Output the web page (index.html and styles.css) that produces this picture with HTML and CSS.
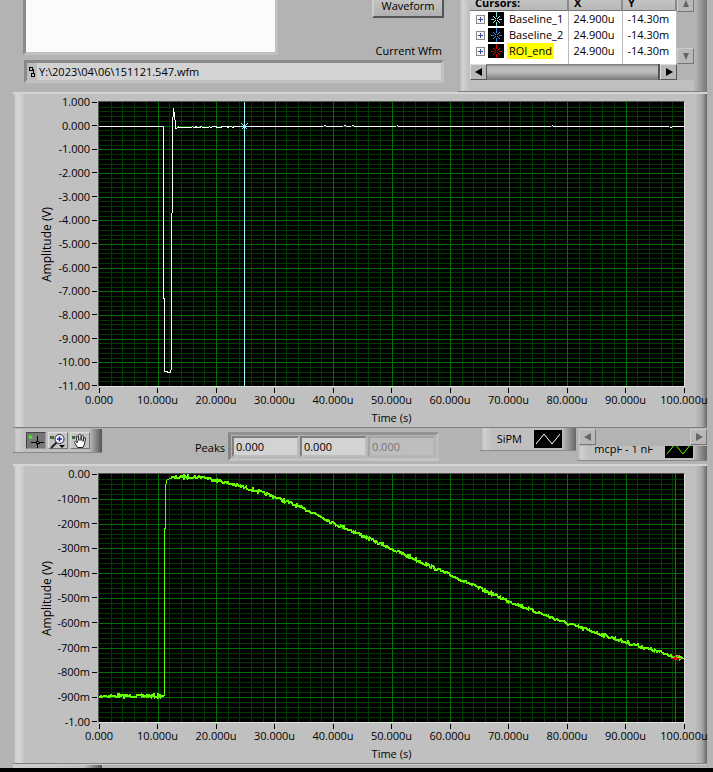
FILE: index.html
```html
<!DOCTYPE html>
<html lang="en">

<head>
    <meta charset="UTF-8">
    <meta name="viewport" content="width=device-width, initial-scale=1.0">
    <title>Waveform Viewer</title>
    <link rel="stylesheet" href="styles.css">
</head>

<body>
    <!--shared icons-->
    <svg class="defs" aria-hidden="true">
        <symbol id="cross" viewBox="0 0 16 16">
            <path d="M2 8.5h4M11 8.5h4M8.5 0v6M8.5 11v5" fill="none" stroke="currentColor" shape-rendering="crispEdges" />
            <path d="M5 5h1v1h-1zM6 6h1v1h-1zM11 5h1v1h-1zM10 6h1v1h-1zM7 7h1v1h-1zM9 7h1v1h-1zM7 9h1v1h-1zM9 9h1v1h-1zM6 10h1v1h-1zM10 10h1v1h-1zM5 11h1v1h-1zM11 11h1v1h-1z" fill="currentColor" shape-rendering="crispEdges" />
        </symbol>
        <symbol id="wave" viewBox="0 0 28 18">
            <path d="M2 14l8-10 8 10 8-10" fill="none" stroke="currentColor" />
        </symbol>
    </svg>

    <div class="top">
        <div class="file">
            <div class="file-row">
                <textarea class="notes" aria-label="Notes"></textarea>
                <div class="actions">
                    <button class="waveform">Waveform</button>
                    <label for="path">Current Wfm</label>
                </div>
            </div>
            <div class="path">
                <svg width="8" height="12" viewBox="0 0 8 12" aria-hidden="true">
                    <path d="M1.500 1.500h3v3h-3zM3.500 7.500h3v3h-3zM4 3.500h1.500v4" fill="none" stroke="#000" shape-rendering="crispEdges" />
                </svg>
                <input id="path" type="text" value="Y:\2023\04\06\151121.547.wfm">
            </div>
        </div>

        <!--cursor list-->
        <div class="cursors">
            <div class="cursors-body">
                <table>
                    <thead>
                        <tr>
                            <th>Cursors:</th>
                            <th>X</th>
                            <th>Y</th>
                        </tr>
                    </thead>
                    <tbody>
                        <tr>
                            <td><div class="name"><button class="expand" aria-label="Expand"></button><svg class="mark cyan"><use href="#cross" /></svg><span>Baseline_1</span></div></td>
                            <td>24.900u</td>
                            <td>-14.30m</td>
                        </tr>
                        <tr>
                            <td><div class="name"><button class="expand" aria-label="Expand"></button><svg class="mark blue"><use href="#cross" /></svg><span>Baseline_2</span></div></td>
                            <td>24.900u</td>
                            <td>-14.30m</td>
                        </tr>
                        <tr>
                            <td><div class="name"><button class="expand" aria-label="Expand"></button><svg class="mark red"><use href="#cross" /></svg><span class="active">ROI_end</span></div></td>
                            <td>24.900u</td>
                            <td>-14.30m</td>
                        </tr>
                    </tbody>
                </table>
                <div class="hscroll">
                    <button class="arrow" aria-label="Left"><svg width="8" height="8"><path d="M7 0v8l-7-4z" /></svg></button>
                    <div class="thumb"></div>
                    <button class="arrow" aria-label="Right"><svg width="8" height="8"><path d="M1 0v8l7-4z" /></svg></button>
                </div>
            </div>
            <div class="vscroll">
                <button class="arrow flat" aria-label="Up"><svg width="8" height="8"><path d="M4 0l3 7h-6z" /></svg></button>
                <button class="arrow flat" aria-label="Down"><svg width="8" height="8"><path d="M4 8l3-7h-6z" /></svg></button>
            </div>
        </div>
    </div>

    <!--SiPM graph-->
    <div class="panel">
        <div class="graph">
            <div class="ytitle">Amplitude (V)</div>
            <div class="yticks">
                <span>1.000</span><span>0.000</span><span>-1.000</span><span>-2.000</span><span>-3.000</span><span>-4.000</span><span>-5.000</span><span>-6.000</span><span>-7.000</span><span>-8.000</span><span>-9.000</span><span>-10.00</span><span>-11.00</span>
            </div>
            <svg class="plot tall" id="sipm" viewBox="0 0 585 284" preserveAspectRatio="none" role="img" aria-label="SiPM"></svg>
        </div>
        <div class="xticks">
            <span>0.000</span><span>10.000u</span><span>20.000u</span><span>30.000u</span><span>40.000u</span><span>50.000u</span><span>60.000u</span><span>70.000u</span><span>80.000u</span><span>90.000u</span><span>100.000u</span>
        </div>
        <div class="xtitle">Time (s)</div>
    </div>

    <div class="middle">
        <div class="tools">
            <button class="tool pressed" aria-label="Cursor">
                <svg width="18" height="16" viewBox="0 0 18 16"><path d="M4 9.500h5M12 9.500h5M10.500 3v5M10.500 11v4M9 8.500v2M12 8.500v2M9 8.500h3M9 10.500h3" stroke="#000" shape-rendering="crispEdges" /><path d="M3.500 2v4M1.500 4h4" stroke="#4fe030" stroke-width="2" /></svg>
            </button>
            <button class="tool" aria-label="Zoom">
                <svg width="18" height="16" viewBox="0 0 18 16"><path d="M1 3h4v3h-4z" fill="#3f6a3b" /><path d="M8 9l-6 6" stroke="#222" stroke-width="2" /><circle cx="10.500" cy="6" r="4.500" fill="#fff" stroke="#223" /><path d="M8 6h5M10.500 3.500v5" stroke="#2222aa" stroke-width="1.500" /><path d="M10 12h6l-3 3z" fill="#000" /></svg>
            </button>
            <button class="tool" aria-label="Pan">
                <svg width="18" height="16" viewBox="0 0 18 16"><path d="M1 3h3v3h-3z" fill="#3f6a3b" /><path d="M6.500 14.500l-3-5c0-1.500 1.500-1.500 3 .5l-1.500-6c.5-1.500 1.500-1 2 0l1 3.500-.5-5c.5-1.500 2-1.500 2.500 0v5l.5-4.500c.5-1 2-1 2 .5l-.5 5 1-3.500c1-1 2 0 1.500 1l-1 5-1.500 3.500z" fill="#fff" stroke="#222" /></svg>
            </button>
        </div>
        <label class="peaks-label" for="peak1">Peaks</label>
        <div class="peaks">
            <input id="peak1" type="text" value="0.000">
            <input type="text" value="0.000" aria-label="Peak 2">
            <input type="text" value="0.000" aria-label="Peak 3" disabled>
        </div>
        <div class="legend">
            <span>SiPM</span>
            <svg class="swatch"><use href="#wave" /></svg>
        </div>
        <div class="legend-scroll">
            <div class="legend">
                <span>mcpF - 1 nF</span>
                <svg class="swatch green"><use href="#wave" /></svg>
            </div>
            <div class="legend-bar">
                <button class="arrow flat" aria-label="Left"><svg width="8" height="8"><path d="M7 0v8l-7-4z" /></svg></button>
                <button class="arrow flat" aria-label="Right"><svg width="8" height="8"><path d="M1 0v8l7-4z" /></svg></button>
            </div>
        </div>
    </div>

    <!--mcpF graph-->
    <div class="panel">
        <div class="graph">
            <div class="ytitle">Amplitude (V)</div>
            <div class="yticks">
                <span>0.00</span><span>-100m</span><span>-200m</span><span>-300m</span><span>-400m</span><span>-500m</span><span>-600m</span><span>-700m</span><span>-800m</span><span>-900m</span><span>-1.00</span>
            </div>
            <svg class="plot" id="mcp" viewBox="0 0 585 248" preserveAspectRatio="none" role="img" aria-label="mcpF"></svg>
        </div>
        <div class="xticks">
            <span>0.000</span><span>10.000u</span><span>20.000u</span><span>30.000u</span><span>40.000u</span><span>50.000u</span><span>60.000u</span><span>70.000u</span><span>80.000u</span><span>90.000u</span><span>100.000u</span>
        </div>
        <div class="xtitle">Time (s)</div>
    </div>

    <div class="next"><div class="next-tools"></div></div>
    <div class="edge"></div>

    <script src="script.js"></script>
</body>

</html>
```

FILE: styles.css
```css
body {
    background-color: #b3b3b3;
    display: flex;
    flex-direction: column;
    min-height: 100vh;
    margin: 0;
    overflow: hidden;
    color: #000;
    font: 12px/16px "Open Sans", "Noto Sans", sans-serif;
}

* {
    box-sizing: border-box;
}

button,
input,
textarea {
    font: inherit;
    color: inherit;
    margin: 0;
    padding: 0;
    border-radius: 0;
}

.defs {
    position: absolute;
    width: 0;
    height: 0;
}

/*the window is scrolled, the upper edge of this part is cut*/
.top {
    display: flex;
    align-items: flex-end;
    justify-content: space-between;
    height: 92px;
    padding: 0 6px 0 23px;
    overflow: hidden;
}

.file {
    flex: 1;
    max-width: 421px;
    padding-bottom: 9px;
}

.file-row {
    display: flex;
    justify-content: space-between;
    align-items: flex-end;
    height: 62px;
}

.notes {
    width: 255px;
    height: 70px;
    margin-bottom: 5px;
    background-color: #fbfbfb;
    border: 3px solid;
    border-color: #8a8a8a #c0c0c0 #c0c0c0 #8a8a8a;
    resize: none;
}

.actions {
    display: flex;
    flex-direction: column;
    align-items: flex-end;
    gap: 25px;
    padding-bottom: 1px;
}

.actions label {
    padding-right: 2px;
    font-size: 11px;
}

.waveform {
    width: 72px;
    height: 24px;
    background: linear-gradient(#c8c8c8, #b0b0b0);
    border: 2px solid;
    border-color: #ddd #555 #555 #ccc;
    font-size: 11px;
}

.path {
    display: flex;
    align-items: center;
    gap: 1px;
    height: 23px;
    margin-left: 1px;
    padding-left: 1px;
    background-color: #bdbdbd;
    border: 3px solid;
    border-color: #898989 #c2c2c2 #c2c2c2 #898989;
}

.path input {
    flex: 1;
    min-width: 0;
    height: 17px;
    padding-left: 2px;
    background-color: #d3d3d3;
    border: 0;
    font-size: 11px;
}

.cursors {
    display: flex;
    flex: 0 0 249px;
    padding: 0 13px 11px 12px;
    background: linear-gradient(90deg, #aaa, #d2d2d2 5px, #bfbfbf 11px, #bfbfbf 235px, #777);
    border-bottom: 1px solid #808080;
}

.cursors-body {
    flex: 1;
}

table {
    width: 100%;
    background-color: #fff;
    border-collapse: collapse;
    table-layout: fixed;
    font-size: 11px;
}

th {
    height: 20px;
    padding: 5px 0 0 5px;
    background: linear-gradient(#ccc, #b8b8b8);
    border-right: 2px solid #8a8a8a;
    border-bottom: 1px solid #777;
    line-height: 14px;
    text-align: left;
}

th:first-child {
    width: 98px;
}

td {
    height: 16px;
    padding: 0 0 0 5px;
    border-right: 1px solid #bbb;
    line-height: 16px;
}

tbody tr:last-child td {
    height: 21px;
    vertical-align: top;
}

td:first-child {
    padding-left: 6px;
}

.name {
    display: flex;
    align-items: center;
    gap: 3px;
}

.name span {
    padding: 0 2px;
}

.name .active {
    background-color: #ff0;
    margin-right: auto;
}

.expand {
    width: 9px;
    height: 9px;
    flex: none;
    background: linear-gradient(#3a4a9a, #3a4a9a) center / 5px 1px no-repeat,
        linear-gradient(#3a4a9a, #3a4a9a) center / 1px 5px no-repeat, #f4f4f4;
    border: 1px solid #888;
}

.mark {
    width: 16px;
    height: 14px;
    flex: none;
    background-color: #000;
}

.cyan {
    color: #9ff;
}

.blue {
    color: #3c96ff;
}

.red {
    color: #f00;
}

.hscroll {
    display: flex;
    height: 16px;
}

.thumb {
    flex: 1;
    background: linear-gradient(#777, #b8b8b8 3px, #bdbdbd 8px, #777);
    border-right: 2px solid #555;
}

.arrow {
    display: flex;
    align-items: center;
    justify-content: center;
    width: 17px;
    height: 16px;
    background-color: #b8b8b8;
    border: 1px solid;
    border-color: #ddd #555 #555 #ddd;
}

.arrow.flat {
    border-color: #ccc #777 #777 #ccc;
    fill: #666;
}

.vscroll {
    display: flex;
    flex-direction: column;
    justify-content: space-between;
    width: 17px;
    padding: 5px 0 16px;
    background-color: #b3b3b3;
}

.panel {
    margin: 0 6px 0 13px;
    padding: 7px 22px 0 27px;
    background: linear-gradient(90deg, #aaa, #d4d4d4 3px, #d4d4d4 7px, #c0c0c0 12px, #c0c0c0 calc(100% - 12px), #a8a8a8 calc(100% - 5px), #666);
    border-top: 2px solid #d4d4d4;
    border-bottom: 1px solid #808080;
    font-size: 11px;
}

.graph {
    display: flex;
}

.ytitle {
    width: 14px;
    font-size: 12px;
    line-height: 14px;
    text-align: center;
    writing-mode: vertical-rl;
    transform: rotate(180deg);
}

.yticks {
    display: flex;
    flex-direction: column;
    justify-content: space-between;
    width: 44px;
    margin: -7px 0;
    line-height: 16px;
}

.yticks span {
    display: flex;
    align-items: center;
    justify-content: flex-end;
    gap: 2px;
    padding-right: 1px;
}

/*tick dash*/
.yticks span::after {
    content: "";
    width: 5px;
    height: 1px;
    background-color: #000;
}

.plot {
    flex: 1;
    min-width: 0;
    height: 250px;
    background-color: #000;
    border: 1px solid;
    border-color: #555 #e0e0e0 #e0e0e0 #555;
}

.plot.tall {
    height: 286px;
}

.plot path {
    fill: none;
    vector-effect: non-scaling-stroke;
    shape-rendering: crispEdges;
}

.plot .minor {
    stroke: #003800;
}

.plot .major {
    stroke: #007000;
}

.plot .white {
    stroke: #fff;
}

.plot .lime {
    stroke: #6f0;
}

.plot .thick {
    stroke-width: 2px;
}

.plot .cyan {
    stroke: #9ff;
}

.plot .red {
    stroke: #e01010;
}

.xticks {
    display: flex;
    justify-content: space-between;
    margin: 1px -24px 0 34px;
    line-height: 14px;
}

.xticks span {
    width: 50px;
    text-align: center;
}

.xticks span::before {
    content: "";
    display: block;
    width: 1px;
    height: 5px;
    margin: 0 auto;
    background-color: #000;
}

.xtitle {
    padding: 3px 0 1px 58px;
    text-align: center;
}

.middle {
    display: flex;
    align-items: flex-start;
    height: 36px;
    padding: 0 6px 0 13px;
}

.tools {
    display: flex;
    gap: 2px;
    width: 89px;
    height: 24px;
    margin-top: 1px;
    padding: 3px 0 0 13px;
    background: linear-gradient(90deg, #aaa, #d0d0d0 4px, #bfbfbf 12px, #bfbfbf 76px, #555);
    border-bottom: 1px solid #888;
}

.tool {
    width: 20px;
    height: 17px;
    background-color: #c4c4c4;
    border: 1px solid;
    border-color: #ddd #777 #777 #ddd;
}

.tool svg {
    display: block;
    fill: none;
}

.tool.pressed {
    background-color: #777;
    border-color: #444 #999 #999 #444;
}

.peaks-label {
    margin: 12px 3px 0 93px;
    font-size: 11px;
}

.peaks {
    display: flex;
    gap: 1px;
    height: 29px;
    margin-top: 4px;
    padding: 1px;
    border: 3px solid;
    border-color: #929292 #bdbdbd #c4c4c4 #858585;
}

.peaks input {
    width: 67px;
    height: 21px;
    padding-left: 2px;
    background-color: #d3d3d3;
    border: 2px solid;
    border-color: #808080 #bdbdbd #bdbdbd #808080;
    font-size: 11px;
}

.peaks input:disabled {
    background-color: #bebebe;
    border-color: #a4a4a4 #b6b6b6 #b6b6b6 #a4a4a4;
    color: #777;
}

.legend {
    display: flex;
    align-items: center;
    justify-content: flex-end;
    gap: 12px;
    width: 96px;
    height: 23px;
    margin-left: auto;
    padding-right: 14px;
    background: linear-gradient(90deg, #aaa, #d0d0d0 4px, #bfbfbf 12px, #bfbfbf calc(100% - 14px), #666);
    border-bottom: 1px solid #888;
    font-size: 11px;
}

.swatch {
    width: 28px;
    height: 18px;
    background-color: #000;
    color: #fff;
}

.green {
    color: #6f0;
}

/*scrollbar lies over the upper half of the legend*/
.legend-scroll {
    position: relative;
    width: 130px;
    margin-left: 1px;
    padding-top: 10px;
}

.legend-scroll .legend {
    width: 100%;
}

.legend-bar {
    position: absolute;
    top: 1px;
    left: 2px;
    right: 0;
    display: flex;
    justify-content: space-between;
    height: 17px;
    background-color: #b3b3b3;
}

.next {
    height: 4px;
    margin: 0 6px 0 13px;
    border-top: 1px solid #ccc;
}

.next-tools {
    width: 89px;
    height: 3px;
    background: linear-gradient(90deg, #d0d0d0, #c0c0c0 80%, #555);
}

.edge {
    flex: 1;
    min-height: 4px;
    background-color: #000;
}
```

FILE: script.js
```js
const NS = 'http://www.w3.org/2000/svg';

function addPath(svg, d, cls) {
    const path = document.createElementNS(NS, 'path');
    path.setAttribute('d', d);
    path.setAttribute('class', cls);
    svg.appendChild(path);
}

//fixed seed, so the noise is the same on every load
let seed = 7;
function noise() {
    seed = (seed * 16807) % 2147483647;
    return seed / 2147483647 - 0.5;
}

//5 minor steps for every major step
function drawGrid(svg, rows) {
    const w = 585;
    const h = svg.viewBox.baseVal.height;
    let minor = '';
    let major = '';
    for (let i = 1; i < 50; i++) {
        const d = 'M' + (Math.round(i * w / 50) + 0.5) + ' 0v' + h;
        if (i % 5) minor += d; else major += d;
    }
    for (let i = 1; i < rows * 5; i++) {
        const d = 'M0 ' + (Math.round(i * h / (rows * 5)) + 0.5) + 'h' + w;
        if (i % 5) minor += d; else major += d;
    }
    addPath(svg, minor, 'minor');
    addPath(svg, major, 'major');
}

//joins the points and puts noise of the given size on the line
function trace(points, size) {
    let d = 'M' + points[0].join(' ');
    for (let i = 1; i < points.length; i++) {
        const [x0, y0] = points[i - 1];
        const [x1, y1] = points[i];
        for (let x = x0 + 1; x < x1; x++) {
            const y = y0 + (y1 - y0) * (x - x0) / (x1 - x0);
            d += 'L' + x + ' ' + (y + noise() * size).toFixed(1);
        }
        d += 'L' + x1 + ' ' + y1;
    }
    return d;
}

//cross mark of a cursor
function drawCursor(svg, x, y, cls) {
    addPath(svg, 'M' + x + ' 0v' + svg.viewBox.baseVal.height, cls);
    addPath(svg, 'M' + (x - 5) + ' ' + y + 'h10M' + (x - 3) + ' ' + (y - 3) + 'l6 6m0-6l-6 6', cls);
}

const sipm = document.getElementById('sipm');
drawGrid(sipm, 12);
addPath(sipm, 'M0 24.5H64.5V120L65.5 269.5H68L69 270.5H71.500L72.5 266V112L73.5 110V24.5L74.5 6.5L76 18L77 26.5L79 25.5', 'white');
addPath(sipm, trace([[79, 25.5], [120, 25], [145, 24.5]], 1.6), 'white');
addPath(sipm, 'M145 24.5H224M225 23.5h2M227 24.5H244M245 23.5h2M247 24.5H252M253 23.5h2M255 24.5H297M298 23.5h1M299 24.5H452M453 23.5h1M454 24.5H570M571 25.5h2M573 24.5H585', 'white');
drawCursor(sipm, 145.5, 24.5, 'cyan');

const mcp = document.getElementById('mcp');
drawGrid(mcp, 10);
const high = [[72, 4], [83, 3], [103, 3], [117, 6], [136, 11], [158, 17], [176, 23], [201, 33], [221, 42], [236, 50], [251, 56], [293, 75], [351, 101], [409, 127], [467, 149], [526, 168], [584, 185]];
addPath(mcp, 'M65.5 222V54L66.5 54V12L68 6L72 4', 'lime');
addPath(mcp, trace([[0, 222], [65, 222]], 3), 'lime thick');
addPath(mcp, trace(high, 3), 'lime thick');
drawCursor(mcp, 576.5, 184.5, 'red');
```
